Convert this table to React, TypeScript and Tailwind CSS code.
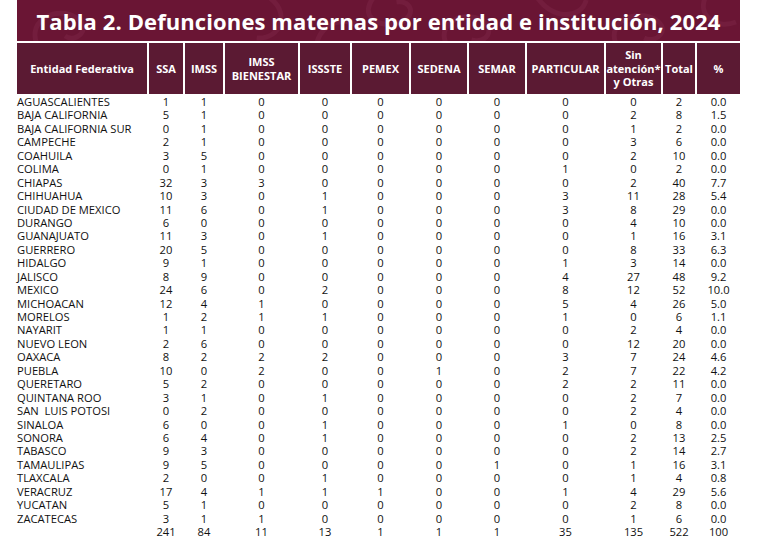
import React from 'react';

const columns = [
  { label: ['Entidad Federativa'], w: 'w-[130px]' },
  { label: ['SSA'], w: 'w-[34px]' },
  { label: ['IMSS'], w: 'w-[38px]' },
  { label: ['IMSS', 'BIENESTAR'], w: 'w-[73px]' },
  { label: ['ISSSTE'], w: 'w-[50px]' },
  { label: ['PEMEX'], w: 'w-[57px]' },
  { label: ['SEDENA'], w: 'w-[56px]' },
  { label: ['SEMAR'], w: 'w-[56px]' },
  { label: ['PARTICULAR'], w: 'w-[77px]' },
  { label: ['Sin', 'atención*', 'y Otras'], w: 'w-[55px]' },
  { label: ['Total'], w: 'w-[32px]' },
  { label: ['%'], w: 'w-[43px]' },
];

const rows: [string, ...(string | number)[]][] = [
  ['AGUASCALIENTES', 1, 1, 0, 0, 0, 0, 0, 0, 0, 2, '0.0'],
  ['BAJA CALIFORNIA', 5, 1, 0, 0, 0, 0, 0, 0, 2, 8, '1.5'],
  ['BAJA CALIFORNIA SUR', 0, 1, 0, 0, 0, 0, 0, 0, 1, 2, '0.0'],
  ['CAMPECHE', 2, 1, 0, 0, 0, 0, 0, 0, 3, 6, '0.0'],
  ['COAHUILA', 3, 5, 0, 0, 0, 0, 0, 0, 2, 10, '0.0'],
  ['COLIMA', 0, 1, 0, 0, 0, 0, 0, 1, 0, 2, '0.0'],
  ['CHIAPAS', 32, 3, 3, 0, 0, 0, 0, 0, 2, 40, '7.7'],
  ['CHIHUAHUA', 10, 3, 0, 1, 0, 0, 0, 3, 11, 28, '5.4'],
  ['CIUDAD DE MEXICO', 11, 6, 0, 1, 0, 0, 0, 3, 8, 29, '0.0'],
  ['DURANGO', 6, 0, 0, 0, 0, 0, 0, 0, 4, 10, '0.0'],
  ['GUANAJUATO', 11, 3, 0, 1, 0, 0, 0, 0, 1, 16, '3.1'],
  ['GUERRERO', 20, 5, 0, 0, 0, 0, 0, 0, 8, 33, '6.3'],
  ['HIDALGO', 9, 1, 0, 0, 0, 0, 0, 1, 3, 14, '0.0'],
  ['JALISCO', 8, 9, 0, 0, 0, 0, 0, 4, 27, 48, '9.2'],
  ['MEXICO', 24, 6, 0, 2, 0, 0, 0, 8, 12, 52, '10.0'],
  ['MICHOACAN', 12, 4, 1, 0, 0, 0, 0, 5, 4, 26, '5.0'],
  ['MORELOS', 1, 2, 1, 1, 0, 0, 0, 1, 0, 6, '1.1'],
  ['NAYARIT', 1, 1, 0, 0, 0, 0, 0, 0, 2, 4, '0.0'],
  ['NUEVO LEON', 2, 6, 0, 0, 0, 0, 0, 0, 12, 20, '0.0'],
  ['OAXACA', 8, 2, 2, 2, 0, 0, 0, 3, 7, 24, '4.6'],
  ['PUEBLA', 10, 0, 2, 0, 0, 1, 0, 2, 7, 22, '4.2'],
  ['QUERETARO', 5, 2, 0, 0, 0, 0, 0, 2, 2, 11, '0.0'],
  ['QUINTANA ROO', 3, 1, 0, 1, 0, 0, 0, 0, 2, 7, '0.0'],
  ['SAN  LUIS POTOSI', 0, 2, 0, 0, 0, 0, 0, 0, 2, 4, '0.0'],
  ['SINALOA', 6, 0, 0, 1, 0, 0, 0, 1, 0, 8, '0.0'],
  ['SONORA', 6, 4, 0, 1, 0, 0, 0, 0, 2, 13, '2.5'],
  ['TABASCO', 9, 3, 0, 0, 0, 0, 0, 0, 2, 14, '2.7'],
  ['TAMAULIPAS', 9, 5, 0, 0, 0, 0, 1, 0, 1, 16, '3.1'],
  ['TLAXCALA', 2, 0, 0, 1, 0, 0, 0, 0, 1, 4, '0.8'],
  ['VERACRUZ', 17, 4, 1, 1, 1, 0, 0, 1, 4, 29, '5.6'],
  ['YUCATAN', 5, 1, 0, 0, 0, 0, 0, 0, 2, 8, '0.0'],
  ['ZACATECAS', 3, 1, 1, 0, 0, 0, 0, 0, 1, 6, '0.0'],
  ['', 241, 84, 11, 13, 1, 1, 1, 35, 135, 522, 100],
];

// faint ornamental swirls behind the title
function Ornament() {
  return (
    <svg className="absolute inset-0 h-full w-full" viewBox="0 0 724 41" preserveAspectRatio="none" fill="none">
      <g stroke="#762040" strokeWidth="5" opacity="0.75">
        <path d="M20 44 C 10 20, 40 5, 60 18 C 75 28, 60 44, 48 36" />
        <path d="M250 -4 C 275 10, 265 40, 240 38" />
        <path d="M300 44 C 305 20, 335 15, 345 30" />
        <path d="M360 -6 C 340 15, 360 30, 385 22 C 400 15, 395 0, 380 2" />
        <path d="M430 44 C 420 25, 445 10, 465 20 C 480 30, 470 44, 455 40" />
        <path d="M520 -4 C 535 20, 565 20, 570 0" />
        <path d="M600 44 C 590 22, 620 8, 640 20 C 655 30, 640 44, 628 38" />
        <path d="M690 -4 C 680 15, 700 30, 720 22" />
      </g>
    </svg>
  );
}

export default function App() {
  return (
    <div className="min-h-[539px] bg-white font-['Open_Sans',sans-serif] text-[#111]">
      <div className="ml-[17px] w-[723px]">
        <div className="relative flex h-[41px] items-center justify-center overflow-hidden bg-[#6a1534]">
          <Ornament />
          <h1 className="relative text-[22px] font-bold leading-none tracking-[0.1px] text-white">
            Tabla 2. Defunciones maternas por entidad e institución, 2024
          </h1>
        </div>

        <div className="mt-[2px] flex h-[51px] gap-[2px]">
          {columns.map((c) => (
            <div
              key={c.label.join()}
              className={`${c.w} flex shrink-0 flex-col items-center justify-center bg-[#5b1a33] text-center text-[11px] font-bold leading-[13.5px] text-white`}
            >
              {c.label.map((l) => (
                <span key={l} className="whitespace-nowrap">{l}</span>
              ))}
            </div>
          ))}
        </div>

        <div className="mt-[1px]">
          {rows.map((r, i) => (
            <div key={i} className="flex h-[13.45px] gap-[2px] text-[11.2px] leading-[13.45px]">
              {r.map((v, j) => (
                <div
                  key={j}
                  className={`${columns[j].w} shrink-0 whitespace-pre ${j === 0 ? 'text-left' : 'text-center'}`}
                >
                  {v}
                </div>
              ))}
            </div>
          ))}
        </div>
      </div>
    </div>
  );
}
